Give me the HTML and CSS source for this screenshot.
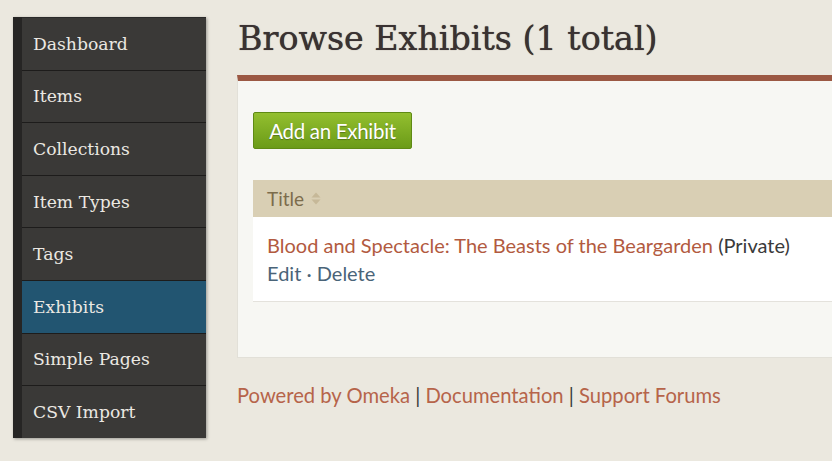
FILE: index.html
```html
<!DOCTYPE html>
<html>
<head>
<meta charset="utf-8">
<link rel="stylesheet" href="styles.css">
</head>
<body>
<div class="page">
  <nav class="sidebar">
    <a class="nav-item">Dashboard</a>
    <a class="nav-item">Items</a>
    <a class="nav-item">Collections</a>
    <a class="nav-item">Item Types</a>
    <a class="nav-item">Tags</a>
    <a class="nav-item active">Exhibits</a>
    <a class="nav-item">Simple Pages</a>
    <a class="nav-item">CSV Import</a>
  </nav>
  <main class="main">
    <h1 class="title">Browse Exhibits (1 total)</h1>
    <section class="panel">
      <a class="btn-add">Add an Exhibit</a>
      <div class="table">
        <div class="thead">Title <span class="sort"><svg width="10" height="13" viewBox="0 0 10 13"><path d="M5 0.5 L9.5 5.5 H0.5 Z" fill="#c6b898"/><path d="M5 12.5 L9.5 7.5 H0.5 Z" fill="#c6b898"/></svg></span></div>
        <div class="row">
          <div><a class="exhibit-link">Blood and Spectacle: The Beasts of the Beargarden</a> <span class="private">(Private)</span></div>
          <div class="actions"><a class="action">Edit</a> · <a class="action">Delete</a></div>
        </div>
      </div>
    </section>
    <footer class="footer">
      <a class="flink">Powered by Omeka</a> <span class="sep">|</span> <a class="flink">Documentation</a> <span class="sep">|</span> <a class="flink">Support Forums</a>
    </footer>
  </main>
</div>
</body>
</html>
```
FILE: styles.css
```css
html, body {
  margin: 0;
  padding: 0;
}
body {
  background: #ebe8df;
  width: 832px;
  height: 461px;
  overflow: hidden;
}
.page {
  display: flex;
  align-items: flex-start;
  padding: 17px 0 0 13px;
}
.sidebar {
  width: 193px;
  display: flex;
  flex-direction: column;
  background: #3a3937;
  border-left: 9px solid #262524;
  box-sizing: border-box;
  box-shadow: 1px 1px 3px rgba(0,0,0,0.35);
}
.nav-item {
  height: 52.6px;
  box-sizing: border-box;
  display: flex;
  align-items: center;
  padding-left: 11px;
  font-family: "DejaVu Serif", serif;
  font-size: 17.2px;
  color: #ebe8e2;
  border-top: 1px solid #1d1c1b;
}
.nav-item:first-child {
  border-top: 1px solid #2a2a2a;
}
.nav-item.active {
  background: #225571;
}
.main {
  margin-left: 31px;
  flex: 1;
  display: flex;
  flex-direction: column;
}
.title {
  margin: 0;
  height: 58px;
  box-sizing: border-box;
  padding: 0 0 0 1px;
  font-family: "DejaVu Serif", serif;
  font-weight: normal;
  font-size: 33.3px;
  line-height: 44px;
  color: #3a3232;
  text-shadow: 0 0 0.7px #3a3232;
}
.panel {
  border-top: 6px solid #9b5843;
  background: #f7f7f3;
  border-left: 1px solid #e2e0d8;
  border-bottom: 1px solid #e2e0d8;
  height: 283px;
  box-sizing: border-box;
  padding: 31px 0 0 15px;
  display: flex;
  flex-direction: column;
  align-items: flex-start;
}
.btn-add {
  height: 37px;
  width: 159px;
  box-sizing: border-box;
  display: flex;
  align-items: center;
  justify-content: center;
  background: linear-gradient(#93bf2f, #6b9b18);
  border: 1px solid #5f8a14;
  border-radius: 2px;
  color: #fff;
  font-family: "Lato", sans-serif;
  font-size: 20.5px;
  letter-spacing: -0.3px;
  text-shadow: 0 1px 1px rgba(0,0,0,0.3);
}
.table {
  margin-top: 31px;
  align-self: stretch;
  display: flex;
  flex-direction: column;
}
.thead {
  height: 37px;
  background: #d9cfb4;
  display: flex;
  align-items: center;
  padding-left: 14px;
  font-family: "Lato", sans-serif;
  font-size: 19px;
  color: #7c6c4c;
}
.sort {
  margin-left: 7px;
  display: flex;
}
.row {
  height: 85px;
  box-sizing: border-box;
  background: #fff;
  border-bottom: 1px solid #e4e2dc;
  padding: 14px 0 0 14px;
  font-family: "Lato", sans-serif;
  font-size: 20px;
  line-height: 28px;
  color: #333;
}
.exhibit-link {
  color: #b25a40;
}
.private {
  color: #3a3a3a;
}
.actions {
  color: #4a6478;
}
.action {
  color: #4a6478;
}
.footer {
  margin-top: 25px;
  font-family: "Lato", sans-serif;
  font-size: 20.2px;
  color: #b5644a;
}
.flink {
  color: #b6644a;
}
.sep {
  color: #3a3a3a;
}
```
